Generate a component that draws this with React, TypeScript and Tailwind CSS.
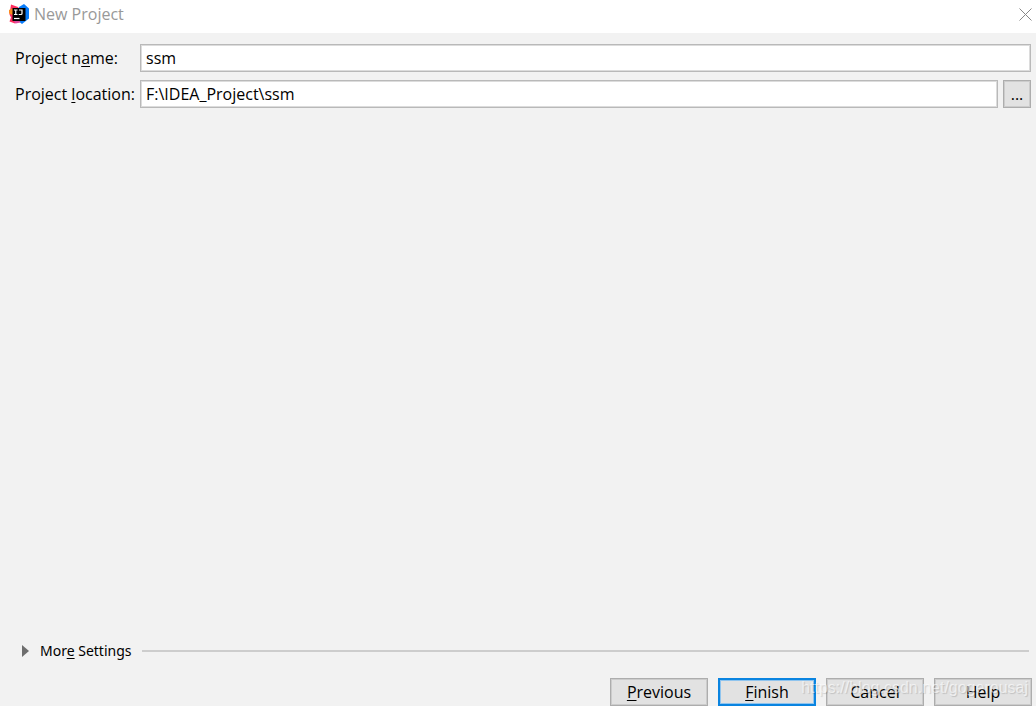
import type { ReactNode } from "react";

const FIELD =
  "h-7 min-w-0 flex-1 border border-[#b9b9b9] bg-white px-[5px] text-base leading-5 text-black inset-ring inset-ring-[#dcdcdc] outline-none";

function Mnemonic({ children }: { children: ReactNode }) {
  return <span className="underline decoration-1 underline-offset-2">{children}</span>;
}

function IdeaLogo() {
  return (
    <svg width="20" height="20" viewBox="0 0 20 20" aria-hidden="true">
      <path d="M2 0.500l7 2.500 2 4-3 10-2 2.500-5.500-2 1.500-4-1.500-3z" fill="#fe2d5d" />
      <path d="M0 6l4-2v7l-4-1.500z" fill="#fc8a1e" />
      <path d="M10 3l5-3 5 4.500v10l-7 5.500-5-4z" fill="#087cfa" />
      <path d="M4 16h6l1.500 2.500-5 1z" fill="#e0489c" />
      <rect x="3.500" y="4" width="13" height="13" fill="#000" />
      <path d="M5 6h3.500M6.750 6v4.500M5 10.500h3.500" fill="none" stroke="#fff" strokeWidth="1.200" />
      <path d="M10 6h3v3.500q0 1-1 1h-2.300" fill="none" stroke="#fff" strokeWidth="1.200" />
      <path d="M5 14.500h5.500" stroke="#fff" strokeWidth="1.200" />
    </svg>
  );
}

function TitleBar() {
  return (
    <header className="flex h-[33px] items-start justify-between bg-white pt-1 pr-1 pl-[9px]">
      <div className="flex items-center gap-[5px]">
        <IdeaLogo />
        <h1 className="text-base leading-5 text-[#999]">New Project</h1>
      </div>
      <button type="button" aria-label="Close" className="mt-1 flex">
        <svg width="13" height="13" viewBox="0 0 13 13" aria-hidden="true">
          <path d="M0.500 0.500l12 12M12.500 0.500l-12 12" fill="none" stroke="#888" />
        </svg>
      </button>
    </header>
  );
}

function DialogButton({ primary, children }: { primary?: boolean; children: ReactNode }) {
  return (
    <button
      type="button"
      className={`h-7 w-[98px] bg-[#e2e2e2] text-base leading-5 text-black ${
        primary
          ? "border-2 border-[#0a84e0] inset-ring inset-ring-[#8fc4ee]"
          : "border border-[#adadad] inset-ring inset-ring-[#cccccc]"
      }`}
    >
      {children}
    </button>
  );
}

export default function App() {
  return (
    <div className="relative flex min-h-screen flex-col bg-[#f2f2f2] font-['Open_Sans','Noto_Sans',sans-serif] text-base leading-5 text-black">
      <TitleBar />

      <main className="flex flex-1 flex-col pt-[11px]">
        <form className="flex flex-col gap-2 pr-[5px] pl-[15px]">
          <div className="flex items-center">
            <label htmlFor="project-name" className="w-[125px] shrink-0 whitespace-nowrap">
              Project n<Mnemonic>a</Mnemonic>me:
            </label>
            <input id="project-name" type="text" defaultValue="ssm" className={FIELD} />
          </div>
          <div className="flex items-center">
            <label htmlFor="project-location" className="w-[125px] shrink-0 whitespace-nowrap">
              Project <Mnemonic>l</Mnemonic>ocation:
            </label>
            <input
              id="project-location"
              type="text"
              defaultValue="F:\IDEA_Project\ssm"
              className={FIELD}
            />
            <button
              type="button"
              aria-label="Browse"
              className="ml-[5px] h-7 w-7 border border-[#adadad] bg-[#e2e2e2] leading-5 inset-ring inset-ring-[#cccccc]"
            >
              ...
            </button>
          </div>
        </form>

        <button
          type="button"
          aria-expanded="false"
          className="mt-auto flex items-center pr-[7px] pl-[22px] font-['Noto_Sans',sans-serif] text-sm leading-5"
        >
          <svg width="7" height="12" viewBox="0 0 7 12" aria-hidden="true">
            <path d="M0 0l7 6-7 6z" fill="#6e6e6e" />
          </svg>
          <span className="ml-[11px]">
            Mor<Mnemonic>e</Mnemonic> Settings
          </span>
          <span className="ml-2.5 h-0.5 flex-1 bg-[#cdcdcd]" />
        </button>

        <footer className="mt-[17px] flex justify-end gap-2.5 pr-1">
          <DialogButton>
            <Mnemonic>P</Mnemonic>revious
          </DialogButton>
          <DialogButton primary>
            <Mnemonic>F</Mnemonic>inish
          </DialogButton>
          <DialogButton>Cancel</DialogButton>
          <DialogButton>Help</DialogButton>
        </footer>
      </main>

      <p className="pointer-events-none absolute right-2 bottom-2 font-['Liberation_Sans',sans-serif] text-base leading-5 text-white/60 text-shadow-[1px_1px_1px_rgb(0_0_0/0.15)]">
        https://blog.csdn.net/gogerousaj
      </p>
    </div>
  );
}
